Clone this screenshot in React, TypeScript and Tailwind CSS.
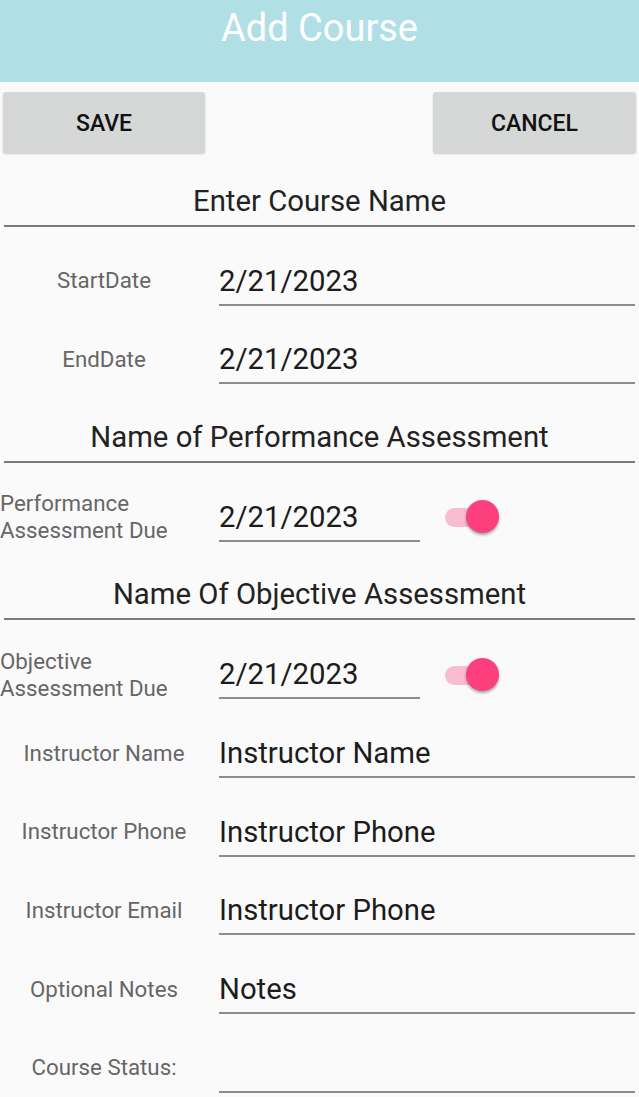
import { ReactNode } from "react";

const FONT = { fontFamily: "Roboto, 'Liberation Sans', sans-serif" };

const Heading = ({ children, first }: { children: ReactNode; first?: boolean }) => (
  <div className={first ? "h-[74px] flex flex-col justify-end px-[4px]" : "h-[78.7px] flex flex-col justify-end px-[4px]"}>
    <div className="h-[49px] flex items-center justify-center border-b-2 border-[#7a7a7a] text-[29.3px] text-[#222]">
      {children}
    </div>
  </div>
);

const Toggle = () => (
  <div className="relative w-[54px] h-[34px] ml-[25px] flex items-center">
    <div className="absolute left-0 top-[8px] w-[46px] h-[19px] rounded-full bg-[#f9bcd1]" />
    <div className="absolute left-[21px] top-0 w-[33px] h-[33px] rounded-full bg-[#fd3f7d] shadow-[0_2px_3px_rgba(0,0,0,0.35)]" />
  </div>
);

const Field = ({
  label,
  value,
  twoLine,
  toggle,
}: {
  label: ReactNode;
  value: string;
  twoLine?: boolean;
  toggle?: boolean;
}) => (
  <div className="h-[78.7px] flex items-end pr-[4px]">
    <div
      className={
        twoLine
          ? "w-[219px] shrink-0 h-[49px] flex flex-col justify-center text-left text-[22.3px] leading-[27px] text-[#666]"
          : "w-[208px] mr-[11px] shrink-0 h-[49px] flex items-center justify-center text-[22.3px] text-[#666]"
      }
    >
      {label}
    </div>
    {toggle ? (
      <div className="flex items-center">
        <div className="w-[201px] h-[49px] pt-[3px] flex items-center border-b-2 border-[#8c8c8c] text-[29.3px] text-[#1c1c1c]">
          {value}
        </div>
        <Toggle />
      </div>
    ) : (
      <div className="flex-1 h-[49px] pt-[3px] flex items-center border-b-2 border-[#8c8c8c] text-[29.3px] text-[#1c1c1c]">
        {value}
      </div>
    )}
  </div>
);

export default function App() {
  return (
    <div className="w-[639px] h-[1097px] bg-[#fafafa] overflow-hidden" style={FONT}>
      <div className="h-[82px] bg-[#b0dfe5] flex justify-center">
        <h1 className="mt-[5px] text-[38px] leading-[46px] text-white">Add Course</h1>
      </div>

      <div className="flex justify-between px-[3px] mt-[10px]">
        <button className="w-[202px] h-[61px] pt-[3px] bg-[#d6d7d7] rounded-[3px] shadow-[0_1px_2px_rgba(0,0,0,0.2)] text-[23px] font-medium text-[#111]">
          SAVE
        </button>
        <button className="w-[203px] h-[61px] pt-[3px] bg-[#d6d7d7] rounded-[3px] shadow-[0_1px_2px_rgba(0,0,0,0.2)] text-[23px] font-medium text-[#111]">
          CANCEL
        </button>
      </div>

      <Heading first>Enter Course Name</Heading>
      <Field label="StartDate" value="2/21/2023" />
      <Field label="EndDate" value="2/21/2023" />
      <Heading>Name of Performance Assessment</Heading>
      <Field
        twoLine
        toggle
        label={
          <>
            <span>Performance</span>
            <span>Assessment Due</span>
          </>
        }
        value="2/21/2023"
      />
      <Heading>Name Of Objective Assessment</Heading>
      <Field
        twoLine
        toggle
        label={
          <>
            <span>Objective</span>
            <span>Assessment Due</span>
          </>
        }
        value="2/21/2023"
      />
      <Field label="Instructor Name" value="Instructor Name" />
      <Field label="Instructor Phone" value="Instructor Phone" />
      <Field label="Instructor Email" value="Instructor Phone" />
      <Field label="Optional Notes" value="Notes" />
      <Field label="Course Status:" value="" />
    </div>
  );
}
